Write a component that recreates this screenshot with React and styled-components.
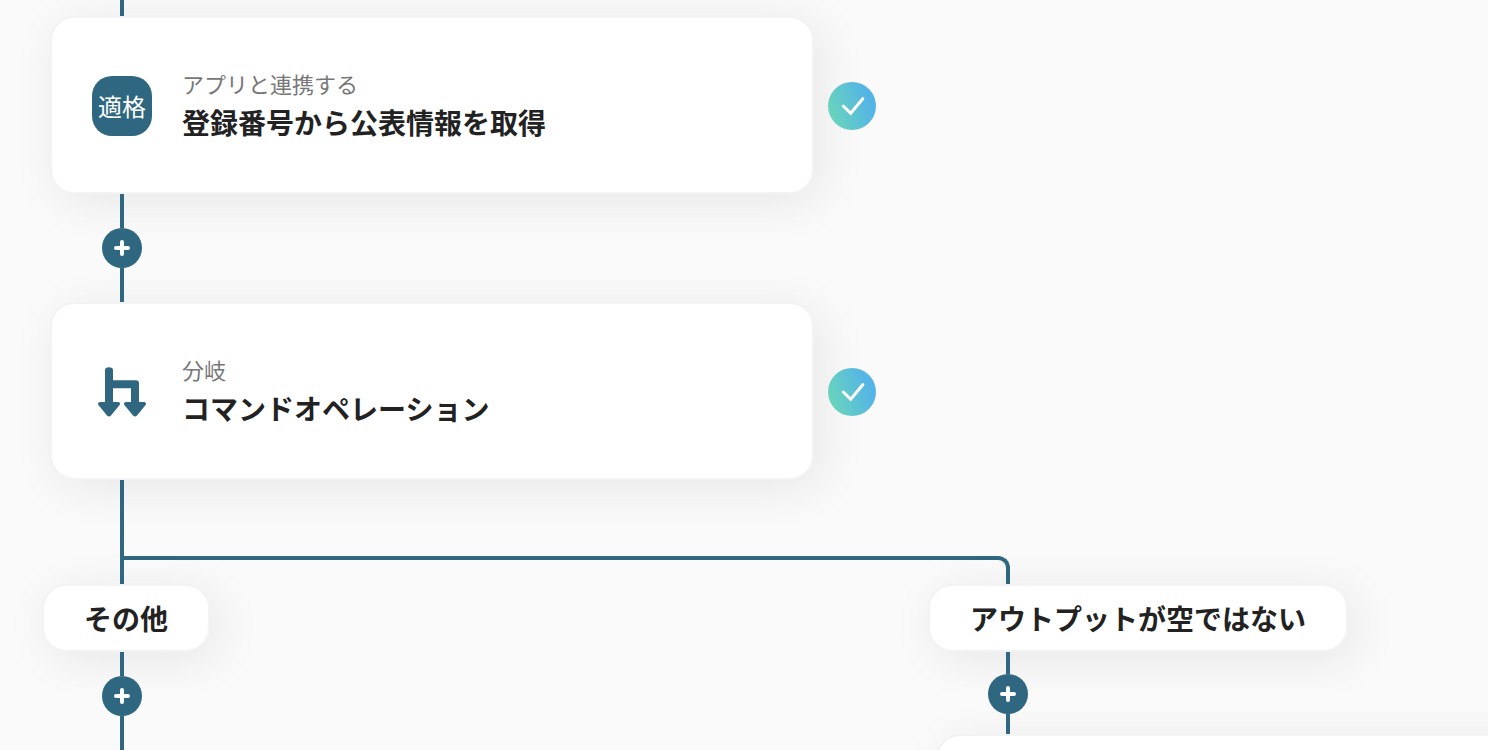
import React from "react";
import styled, { createGlobalStyle } from "styled-components";

const BranchIcon = () => (
  <svg width="60" height="60" viewBox="0 0 60 60" fill="#2f6780" aria-hidden="true">
    <path d="M13 43V8.5Q13 5.3 17 5.3T21 8.5V18.3H44Q47 18.3 47 21.3V43H39V26.3H21V43Z" />
    <path d="M8 40H26.2Q29 40.6 27.6 43L19 53.4Q17 55.6 15 53.4L6.4 43Q5 40.6 8 40Z" />
    <path d="M34 40H52.2Q55 40.6 53.6 43L45 53.4Q43 55.6 41 53.4L32.4 43Q31 40.6 34 40Z" />
  </svg>
);

const CheckMark = () => (
  <Status role="img" aria-label="完了">
    <svg width="48" height="48" viewBox="0 0 48 48" fill="none">
      <path
        d="M15.2 24L22.7 31.3L34.8 16.7"
        stroke="#fff"
        strokeWidth="3"
        strokeLinecap="round"
      />
    </svg>
  </Status>
);

const AddButton = () => (
  <Add type="button" aria-label="追加">
    <svg width="16" height="16" viewBox="0 0 16 16" fill="none">
      <path d="M8 2V14M2 8H14" stroke="#fff" strokeWidth="4" strokeLinecap="round" />
    </svg>
  </Add>
);

const Step = ({ icon, label, title }) => (
  <StepRow>
    <Card>
      {icon}
      <CardText>
        <Label>{label}</Label>
        <Title>{title}</Title>
      </CardText>
    </Card>
    <CheckMark />
  </StepRow>
);

const App = () => {
  return (
    <>
      <GlobalStyle />
      <Canvas>
        <Line $size={16} />
        <Step
          icon={<Badge>適格</Badge>}
          label="アプリと連携する"
          title="登録番号から公表情報を取得"
        />
        <Line $size={34} />
        <AddButton />
        <Line $size={34} />
        <Step icon={<BranchIcon />} label="分岐" title="コマンドオペレーション" />
        <Line $size={76} />
        <Fork />
        <Branches>
          <Branch>
            <Condition>その他</Condition>
            <Line $size={24} />
            <AddButton />
            <Line $size={120} />
          </Branch>
          <Branch>
            <Condition>アウトプットが空ではない</Condition>
            <Line $size={22} />
            <AddButton />
            <Line $size={20} />
            <Card />
          </Branch>
        </Branches>
      </Canvas>
    </>
  );
};

export default App;

const GlobalStyle = createGlobalStyle`
  * {
    box-sizing: border-box;
  }

  body {
    margin: 0;
    background-color: #fafafa;
    color: #222;
    font-family: "Noto Sans CJK JP", sans-serif;
  }
`;

const Canvas = styled.main`
  display: flex;
  flex-direction: column;
  height: 100vh;
  padding-left: 50px;
  overflow: hidden;

  > * {
    flex-shrink: 0;
  }
`;

const Line = styled.div`
  position: relative;
  z-index: 1;
  width: 4px;
  height: ${({ $size }) => $size}px;
  margin-left: 70px;
  background-color: #2f6780;
`;

const Fork = styled.div`
  position: relative;
  z-index: 1;
  width: 890px;
  height: 28px;
  margin-left: 70px;
  border: 4px solid #2f6780;
  border-bottom: none;
  border-top-right-radius: 12px;
`;

const StepRow = styled.div`
  display: flex;
  align-items: center;
  gap: 14px;
`;

const Card = styled.section`
  display: flex;
  align-items: center;
  gap: 30px;
  width: 764px;
  min-height: 178px;
  padding: 2px 40px 0;
  background-color: #fff;
  background-clip: padding-box;
  border: 2px solid #f3f3f3;
  border-radius: 24px;
  box-shadow: 8px 8px 48px rgba(0, 0, 0, 0.08);
`;

const CardText = styled.div`
  display: flex;
  flex-direction: column;
  padding-bottom: 4px;
`;

const Label = styled.p`
  margin: 0;
  color: #777;
  font-size: 22px;
  line-height: 36px;
`;

const Title = styled.h2`
  margin: 0;
  font-size: 28px;
  font-weight: 700;
  line-height: 42px;
`;

const Badge = styled.span`
  display: flex;
  align-items: center;
  justify-content: center;
  width: 60px;
  height: 60px;
  padding-bottom: 2px;
  border-radius: 20px;
  background-color: #2f6780;
  color: #fff;
  font-size: 24px;
`;

const Status = styled.span`
  display: flex;
  width: 48px;
  height: 48px;
  margin-top: 2px;
  border-radius: 50%;
  background: linear-gradient(70deg, #6ad5bb 10%, #54b4e6 80%);
`;

const Add = styled.button`
  position: relative;
  z-index: 1;
  display: flex;
  align-items: center;
  justify-content: center;
  width: 40px;
  height: 40px;
  margin: 0 0 0 52px;
  padding: 0;
  border: none;
  border-radius: 50%;
  background-color: #2f6780;
  cursor: pointer;
`;

const Branches = styled.div`
  display: flex;
  gap: 122px;
`;

const Branch = styled.div`
  flex: 0 0 764px;
`;

const Condition = styled.h3`
  width: fit-content;
  margin: 0 0 0 -8px;
  padding: 0 40px;
  background-color: #fff;
  background-clip: padding-box;
  border: 2px solid #f3f3f3;
  border-radius: 24px;
  box-shadow: 8px 8px 48px rgba(0, 0, 0, 0.08);
  font-size: 28px;
  font-weight: 700;
  line-height: 64px;
`;
